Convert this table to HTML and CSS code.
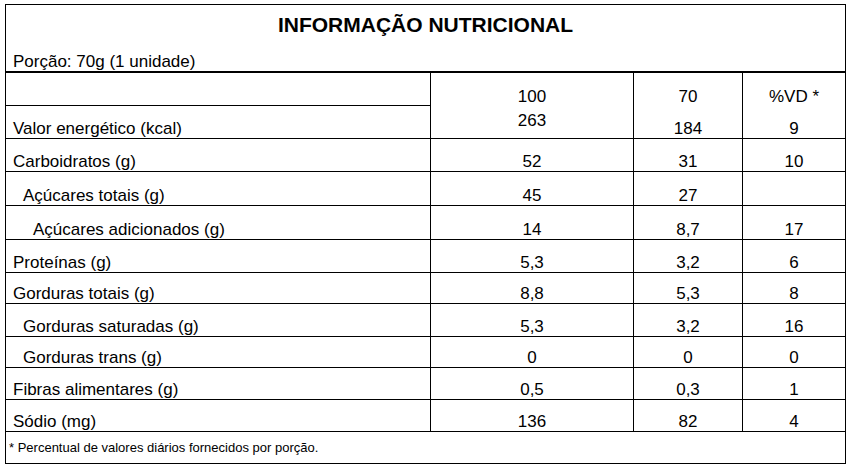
FILE: index.html
```html
<!DOCTYPE html>
<html lang="pt-BR">
<head>
<meta charset="utf-8">
<title>Informação Nutricional</title>
<link rel="stylesheet" href="styles.css">
</head>
<body>
<div class="label">
  <div class="head">
    <h1 class="title">INFORMAÇÃO NUTRICIONAL</h1>
    <div class="portion">Porção: 70g (1 unidade)</div>
  </div>
  <div class="grid">
    <div class="cell name"></div>
    <div class="cell num span"><span>100</span><span class="second s1">263</span></div>
    <div class="cell num span"><span>70</span><span class="second s2">184</span></div>
    <div class="cell num span last"><span>%VD *</span><span class="second s2">9</span></div>

    <div class="cell name">Valor energético (kcal)</div>

    <div class="cell name">Carboidratos (g)</div>
    <div class="cell num">52</div>
    <div class="cell num">31</div>
    <div class="cell num last">10</div>

    <div class="cell name ind1">Açúcares totais (g)</div>
    <div class="cell num">45</div>
    <div class="cell num">27</div>
    <div class="cell num last"></div>

    <div class="cell name ind2">Açúcares adicionados (g)</div>
    <div class="cell num">14</div>
    <div class="cell num">8,7</div>
    <div class="cell num last">17</div>

    <div class="cell name">Proteínas (g)</div>
    <div class="cell num">5,3</div>
    <div class="cell num">3,2</div>
    <div class="cell num last">6</div>

    <div class="cell name">Gorduras totais (g)</div>
    <div class="cell num">8,8</div>
    <div class="cell num">5,3</div>
    <div class="cell num last">8</div>

    <div class="cell name ind1">Gorduras saturadas (g)</div>
    <div class="cell num">5,3</div>
    <div class="cell num">3,2</div>
    <div class="cell num last">16</div>

    <div class="cell name ind1">Gorduras trans (g)</div>
    <div class="cell num">0</div>
    <div class="cell num">0</div>
    <div class="cell num last">0</div>

    <div class="cell name">Fibras alimentares (g)</div>
    <div class="cell num">0,5</div>
    <div class="cell num">0,3</div>
    <div class="cell num last">1</div>

    <div class="cell name">Sódio (mg)</div>
    <div class="cell num">136</div>
    <div class="cell num">82</div>
    <div class="cell num last">4</div>
  </div>
  <div class="foot">* Percentual de valores diários fornecidos por porção.</div>
</div>
</body>
</html>
```

FILE: styles.css
```css
* { box-sizing: border-box; }

html, body {
  margin: 0;
  padding: 0;
  background: #ffffff;
}

body {
  font-family: "Liberation Sans", Arial, sans-serif;
  color: #000000;
}

.label {
  margin: 4px 0 0 5px;
  width: 841px;
  height: 460px;
  border: 1px solid #000;
  display: flex;
  flex-direction: column;
}

.head {
  height: 68px;
  border-bottom: 2px solid #000;
  display: flex;
  flex-direction: column;
  justify-content: space-between;
  padding: 8px 0 0 7px;
}

.title {
  margin: 0;
  font-size: 21px;
  line-height: 24px;
  font-weight: bold;
  text-align: center;
  padding-right: 7px;
}

.portion {
  font-size: 17px;
  line-height: 19px;
}

.grid {
  display: grid;
  grid-template-columns: 425px 203px 109px 102px;
  grid-template-rows: 33px 33px 33px 34px 34px 33px 31px 33px 31px 32px 32px;
  font-size: 17px;
  line-height: 18px;
}

.cell {
  border-bottom: 1px solid #000;
  border-right: 1px solid #000;
  display: flex;
  align-items: flex-end;
  padding-bottom: 0;
  white-space: nowrap;
}

.cell.last { border-right: none; }

.name { padding-left: 7px; }
.name.ind1 { padding-left: 17px; }
.name.ind2 { padding-left: 27px; }

.num { justify-content: center; }

.span {
  grid-row: span 2;
  flex-direction: column;
  align-items: center;
  justify-content: flex-start;
  padding-top: 14px;
  line-height: 19px;
}

.second.s1 { margin-top: 5px; }
.second.s2 { margin-top: 13px; }

.foot {
  flex: 1;
  display: flex;
  align-items: center;
  padding-left: 3px;
  font-size: 13px;
  line-height: 16px;
}
```
